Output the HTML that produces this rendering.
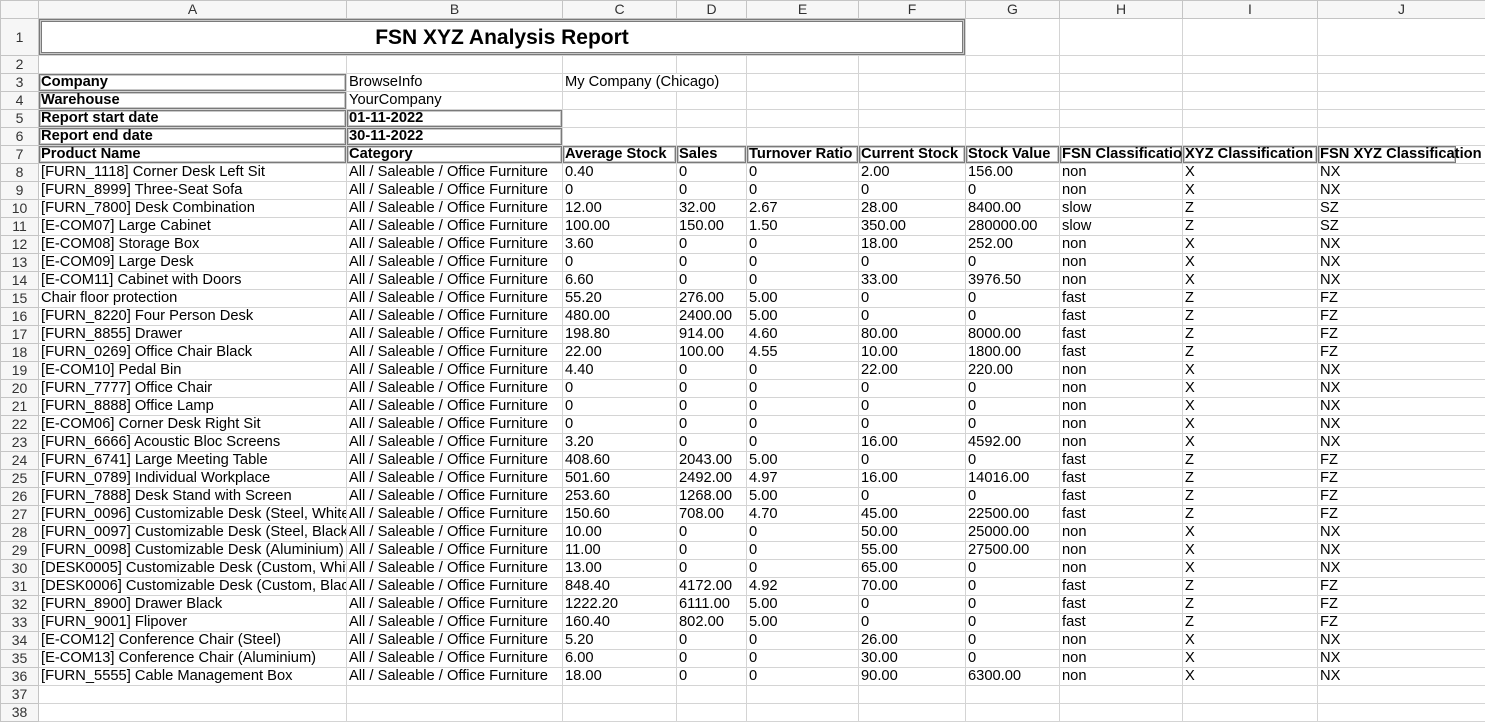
<!DOCTYPE html>
<html><head><meta charset="utf-8"><style>
body{margin:0;background:#fff;width:1485px;height:708px;overflow:hidden;font-family:"Liberation Sans",Arial,sans-serif;}
table{border-collapse:collapse;table-layout:fixed;position:absolute;left:0;top:0;width:1485px;}
td{border:1px solid #d4d4d4;padding:0 0 0 2px;height:17px;line-height:17px;font-size:14.7px;color:#000;white-space:nowrap;overflow:hidden;}
td.h{background:#f6f6f6;color:#333;text-align:center;padding:0;border-color:#c4c4c4;font-size:14px;}
tr.ch td{height:17px;background:#f6f6f6;color:#333;text-align:center;padding:0;border-color:#c4c4c4;font-size:14px;}
.bx{box-shadow:inset 0 0 0 1px #7a7a7a,inset 0 0 0 2px #c8c8c8;font-weight:bold;}
.t{font-weight:bold;font-size:21px;text-align:center;box-shadow:inset 0 0 0 1px #7a7a7a,inset 0 0 0 2px #c8c8c8,inset 0 0 0 3px #7a7a7a;}
</style></head><body>
<table>
<colgroup><col style="width:38px"><col style="width:308px"><col style="width:216px"><col style="width:114px"><col style="width:70px"><col style="width:112px"><col style="width:107px"><col style="width:94px"><col style="width:123px"><col style="width:135px"><col style="width:168px"></colgroup>
<tr class="ch"><td></td><td>A</td><td>B</td><td>C</td><td>D</td><td>E</td><td>F</td><td>G</td><td>H</td><td>I</td><td>J</td></tr>
<tr><td class="h" style="height:36px">1</td><td colspan="6" class="t" style="padding-left:0">FSN XYZ Analysis Report</td><td></td><td></td><td></td><td></td></tr>
<tr><td class="h" style="height:16px">2</td><td></td><td></td><td></td><td></td><td></td><td></td><td></td><td></td><td></td><td></td></tr>
<tr><td class="h">3</td><td class="bx">Company</td><td>BrowseInfo</td><td colspan="2">My Company (Chicago)</td><td></td><td></td><td></td><td></td><td></td><td></td></tr>
<tr><td class="h">4</td><td class="bx">Warehouse</td><td>YourCompany</td><td></td><td></td><td></td><td></td><td></td><td></td><td></td><td></td></tr>
<tr><td class="h">5</td><td class="bx">Report start date</td><td class="bx">01-11-2022</td><td></td><td></td><td></td><td></td><td></td><td></td><td></td><td></td></tr>
<tr><td class="h">6</td><td class="bx">Report end date</td><td class="bx">30-11-2022</td><td></td><td></td><td></td><td></td><td></td><td></td><td></td><td></td></tr>
<tr><td class="h">7</td><td class="bx">Product Name</td><td class="bx">Category</td><td class="bx">Average Stock</td><td class="bx">Sales</td><td class="bx">Turnover Ratio</td><td class="bx">Current Stock</td><td class="bx">Stock Value</td><td class="bx">FSN Classification</td><td class="bx">XYZ Classification</td><td style="padding:0;overflow:visible"><div class="bx" style="width:136px;height:17px;padding-left:2px;overflow:visible">FSN XYZ Classification</div></td></tr>
<tr><td class="h">8</td><td>[FURN_1118] Corner Desk Left Sit</td><td>All / Saleable / Office Furniture</td><td>0.40</td><td>0</td><td>0</td><td>2.00</td><td>156.00</td><td>non</td><td>X</td><td>NX</td></tr>
<tr><td class="h">9</td><td>[FURN_8999] Three-Seat Sofa</td><td>All / Saleable / Office Furniture</td><td>0</td><td>0</td><td>0</td><td>0</td><td>0</td><td>non</td><td>X</td><td>NX</td></tr>
<tr><td class="h">10</td><td>[FURN_7800] Desk Combination</td><td>All / Saleable / Office Furniture</td><td>12.00</td><td>32.00</td><td>2.67</td><td>28.00</td><td>8400.00</td><td>slow</td><td>Z</td><td>SZ</td></tr>
<tr><td class="h">11</td><td>[E-COM07] Large Cabinet</td><td>All / Saleable / Office Furniture</td><td>100.00</td><td>150.00</td><td>1.50</td><td>350.00</td><td>280000.00</td><td>slow</td><td>Z</td><td>SZ</td></tr>
<tr><td class="h">12</td><td>[E-COM08] Storage Box</td><td>All / Saleable / Office Furniture</td><td>3.60</td><td>0</td><td>0</td><td>18.00</td><td>252.00</td><td>non</td><td>X</td><td>NX</td></tr>
<tr><td class="h">13</td><td>[E-COM09] Large Desk</td><td>All / Saleable / Office Furniture</td><td>0</td><td>0</td><td>0</td><td>0</td><td>0</td><td>non</td><td>X</td><td>NX</td></tr>
<tr><td class="h">14</td><td>[E-COM11] Cabinet with Doors</td><td>All / Saleable / Office Furniture</td><td>6.60</td><td>0</td><td>0</td><td>33.00</td><td>3976.50</td><td>non</td><td>X</td><td>NX</td></tr>
<tr><td class="h">15</td><td>Chair floor protection</td><td>All / Saleable / Office Furniture</td><td>55.20</td><td>276.00</td><td>5.00</td><td>0</td><td>0</td><td>fast</td><td>Z</td><td>FZ</td></tr>
<tr><td class="h">16</td><td>[FURN_8220] Four Person Desk</td><td>All / Saleable / Office Furniture</td><td>480.00</td><td>2400.00</td><td>5.00</td><td>0</td><td>0</td><td>fast</td><td>Z</td><td>FZ</td></tr>
<tr><td class="h">17</td><td>[FURN_8855] Drawer</td><td>All / Saleable / Office Furniture</td><td>198.80</td><td>914.00</td><td>4.60</td><td>80.00</td><td>8000.00</td><td>fast</td><td>Z</td><td>FZ</td></tr>
<tr><td class="h">18</td><td>[FURN_0269] Office Chair Black</td><td>All / Saleable / Office Furniture</td><td>22.00</td><td>100.00</td><td>4.55</td><td>10.00</td><td>1800.00</td><td>fast</td><td>Z</td><td>FZ</td></tr>
<tr><td class="h">19</td><td>[E-COM10] Pedal Bin</td><td>All / Saleable / Office Furniture</td><td>4.40</td><td>0</td><td>0</td><td>22.00</td><td>220.00</td><td>non</td><td>X</td><td>NX</td></tr>
<tr><td class="h">20</td><td>[FURN_7777] Office Chair</td><td>All / Saleable / Office Furniture</td><td>0</td><td>0</td><td>0</td><td>0</td><td>0</td><td>non</td><td>X</td><td>NX</td></tr>
<tr><td class="h">21</td><td>[FURN_8888] Office Lamp</td><td>All / Saleable / Office Furniture</td><td>0</td><td>0</td><td>0</td><td>0</td><td>0</td><td>non</td><td>X</td><td>NX</td></tr>
<tr><td class="h">22</td><td>[E-COM06] Corner Desk Right Sit</td><td>All / Saleable / Office Furniture</td><td>0</td><td>0</td><td>0</td><td>0</td><td>0</td><td>non</td><td>X</td><td>NX</td></tr>
<tr><td class="h">23</td><td>[FURN_6666] Acoustic Bloc Screens</td><td>All / Saleable / Office Furniture</td><td>3.20</td><td>0</td><td>0</td><td>16.00</td><td>4592.00</td><td>non</td><td>X</td><td>NX</td></tr>
<tr><td class="h">24</td><td>[FURN_6741] Large Meeting Table</td><td>All / Saleable / Office Furniture</td><td>408.60</td><td>2043.00</td><td>5.00</td><td>0</td><td>0</td><td>fast</td><td>Z</td><td>FZ</td></tr>
<tr><td class="h">25</td><td>[FURN_0789] Individual Workplace</td><td>All / Saleable / Office Furniture</td><td>501.60</td><td>2492.00</td><td>4.97</td><td>16.00</td><td>14016.00</td><td>fast</td><td>Z</td><td>FZ</td></tr>
<tr><td class="h">26</td><td>[FURN_7888] Desk Stand with Screen</td><td>All / Saleable / Office Furniture</td><td>253.60</td><td>1268.00</td><td>5.00</td><td>0</td><td>0</td><td>fast</td><td>Z</td><td>FZ</td></tr>
<tr><td class="h">27</td><td>[FURN_0096] Customizable Desk (Steel, White)</td><td>All / Saleable / Office Furniture</td><td>150.60</td><td>708.00</td><td>4.70</td><td>45.00</td><td>22500.00</td><td>fast</td><td>Z</td><td>FZ</td></tr>
<tr><td class="h">28</td><td>[FURN_0097] Customizable Desk (Steel, Black)</td><td>All / Saleable / Office Furniture</td><td>10.00</td><td>0</td><td>0</td><td>50.00</td><td>25000.00</td><td>non</td><td>X</td><td>NX</td></tr>
<tr><td class="h">29</td><td>[FURN_0098] Customizable Desk (Aluminium)</td><td>All / Saleable / Office Furniture</td><td>11.00</td><td>0</td><td>0</td><td>55.00</td><td>27500.00</td><td>non</td><td>X</td><td>NX</td></tr>
<tr><td class="h">30</td><td>[DESK0005] Customizable Desk (Custom, White)</td><td>All / Saleable / Office Furniture</td><td>13.00</td><td>0</td><td>0</td><td>65.00</td><td>0</td><td>non</td><td>X</td><td>NX</td></tr>
<tr><td class="h">31</td><td>[DESK0006] Customizable Desk (Custom, Black)</td><td>All / Saleable / Office Furniture</td><td>848.40</td><td>4172.00</td><td>4.92</td><td>70.00</td><td>0</td><td>fast</td><td>Z</td><td>FZ</td></tr>
<tr><td class="h">32</td><td>[FURN_8900] Drawer Black</td><td>All / Saleable / Office Furniture</td><td>1222.20</td><td>6111.00</td><td>5.00</td><td>0</td><td>0</td><td>fast</td><td>Z</td><td>FZ</td></tr>
<tr><td class="h">33</td><td>[FURN_9001] Flipover</td><td>All / Saleable / Office Furniture</td><td>160.40</td><td>802.00</td><td>5.00</td><td>0</td><td>0</td><td>fast</td><td>Z</td><td>FZ</td></tr>
<tr><td class="h">34</td><td>[E-COM12] Conference Chair (Steel)</td><td>All / Saleable / Office Furniture</td><td>5.20</td><td>0</td><td>0</td><td>26.00</td><td>0</td><td>non</td><td>X</td><td>NX</td></tr>
<tr><td class="h">35</td><td>[E-COM13] Conference Chair (Aluminium)</td><td>All / Saleable / Office Furniture</td><td>6.00</td><td>0</td><td>0</td><td>30.00</td><td>0</td><td>non</td><td>X</td><td>NX</td></tr>
<tr><td class="h">36</td><td>[FURN_5555] Cable Management Box</td><td>All / Saleable / Office Furniture</td><td>18.00</td><td>0</td><td>0</td><td>90.00</td><td>6300.00</td><td>non</td><td>X</td><td>NX</td></tr>
<tr><td class="h">37</td><td></td><td></td><td></td><td></td><td></td><td></td><td></td><td></td><td></td><td></td></tr>
<tr><td class="h">38</td><td></td><td></td><td></td><td></td><td></td><td></td><td></td><td></td><td></td><td></td></tr>
</table>
</body></html>
